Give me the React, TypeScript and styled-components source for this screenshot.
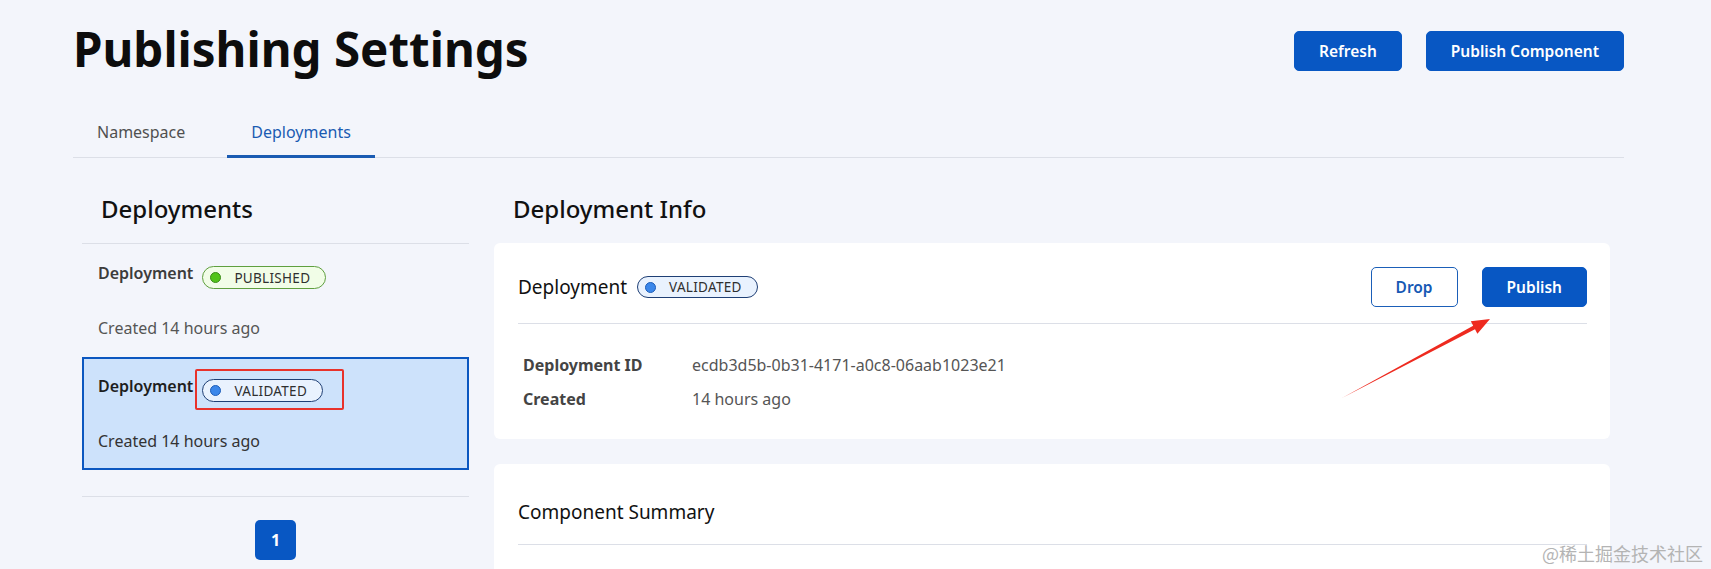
import React from "react";
import styled, { createGlobalStyle } from "styled-components";

const GlobalStyle = createGlobalStyle`
  html, body { margin: 0; padding: 0; }
  body {
    background: #f3f5fb;
    font-family: "Noto Sans", "Open Sans", sans-serif;
    color: #111;
    overflow: hidden;
  }
  * { box-sizing: border-box; }
`;

const Page = styled.div`
  position: relative;
  min-height: 569px;
  padding: 18px 87px 0 73px;
`;

const TopBar = styled.div`
  display: flex;
  justify-content: space-between;
  align-items: flex-start;
`;

const Title = styled.h1`
  margin: 0;
  font-size: 47.5px;
  line-height: 62px;
  font-weight: 700;
  color: #0d0d0d;
`;

const Actions = styled.div`
  display: flex;
  gap: 24px;
  margin-top: 13px;
`;

const Button = styled.button<{ $outline?: boolean }>`
  height: 40px;
  padding: 0 24px;
  border-radius: 5px;
  font-family: inherit;
  font-size: 15.5px;
  font-weight: 600;
  cursor: pointer;
  border: 1px solid ${(p) => (p.$outline ? "#1b5fb8" : "#0857c3")};
  background: ${(p) => (p.$outline ? "#fff" : "#0857c3")};
  color: ${(p) => (p.$outline ? "#1659b4" : "#fff")};
`;

const Tabs = styled.div`
  display: flex;
  gap: 18px;
  margin-top: 26px;
  border-bottom: 1px solid #dcdfe7;
`;

const Tab = styled.div<{ $active?: boolean }>`
  padding: 14px 24px 11px;
  margin-bottom: -1px;
  font-size: 16px;
  line-height: 24px;
  color: ${(p) => (p.$active ? "#1a5bb2" : "#505050")};
  border-bottom: 3px solid ${(p) => (p.$active ? "#1a5bb2" : "transparent")};
`;

const Main = styled.div`
  display: grid;
  grid-template-columns: 387px 1fr;
  gap: 25px;
  margin-top: 35px;
  padding: 0 14px 0 9px;
`;

const Heading = styled.h2<{ $divided?: boolean }>`
  margin: 0 0 ${(p) => (p.$divided ? "0" : "18px")};
  padding: 0 0 ${(p) => (p.$divided ? "18px" : "0")} 19px;
  font-size: 24px;
  line-height: 32px;
  font-weight: 500;
  color: #111;
  border-bottom: ${(p) => (p.$divided ? "1px solid #dcdfe7" : "none")};
`;

const Item = styled.div<{ $selected?: boolean }>`
  display: flex;
  flex-direction: column;
  gap: 30px;
  padding: 14px 14px 15px;
  border: 2px solid ${(p) => (p.$selected ? "#0b57c0" : "transparent")};
  background: ${(p) => (p.$selected ? "#cde2fb" : "transparent")};
`;

const ItemHead = styled.div`
  display: flex;
  align-items: flex-start;
  height: 26px;
`;

const ItemName = styled.span<{ $selected?: boolean }>`
  font-size: 16px;
  line-height: 26px;
  font-weight: 600;
  color: ${(p) => (p.$selected ? "#1e1e1e" : "#3c3c3c")};
`;

const BadgeSlot = styled.span`
  position: relative;
  display: inline-flex;
  margin: 6px 0 0 9px;
`;

const Highlight = styled.span`
  position: absolute;
  left: -7px;
  top: -10px;
  right: -21px;
  bottom: -8px;
  border: 2px solid #e8322b;
  border-radius: 2px;
`;

const Created = styled.div<{ $selected?: boolean }>`
  font-size: 16px;
  line-height: 24px;
  color: ${(p) => (p.$selected ? "#333" : "#555")};
`;

type Tone = "green" | "blue";

const tones = {
  green: { border: "#5f9f3f", bg: "#f1fde7", dot: "#52c41a", dotBorder: "#3a8a18" },
  blue: { border: "#1f3f75", bg: "#e9f2fe", dot: "#3b87ea", dotBorder: "#1d5db8" },
};

const Badge = styled.span<{ $tone: Tone; $h?: number }>`
  display: inline-flex;
  align-items: center;
  gap: 13px;
  height: ${(p) => p.$h ?? 23}px;
  padding: 0 15px 0 7px;
  border-radius: 12px;
  border: 1px solid ${(p) => tones[p.$tone].border};
  background: ${(p) => tones[p.$tone].bg};
  font-size: 13.5px;
  letter-spacing: 0.3px;
  color: #2f2f2f;
  white-space: nowrap;
`;

const Dot = styled.span<{ $tone: Tone }>`
  width: 11px;
  height: 11px;
  border-radius: 50%;
  background: ${(p) => tones[p.$tone].dot};
  border: 1px solid ${(p) => tones[p.$tone].dotBorder};
`;

const ListFooter = styled.div`
  display: flex;
  justify-content: center;
  margin-top: 26px;
  padding-top: 23px;
  border-top: 1px solid #dcdfe7;
`;

const PageButton = styled.button`
  width: 41px;
  height: 40px;
  border: none;
  border-radius: 5px;
  background: #0857c3;
  color: #fff;
  font-family: inherit;
  font-size: 16px;
  font-weight: 700;
`;

const Card = styled.div<{ $min?: number }>`
  position: relative;
  background: #fff;
  border-radius: 6px;
  padding: 0 23px 0 24px;
  min-height: ${(p) => p.$min ?? 0}px;
  & + & {
    margin-top: 25px;
  }
`;

const CardHeader = styled.div<{ $pad: string }>`
  display: flex;
  align-items: center;
  justify-content: space-between;
  padding: ${(p) => p.$pad};
  border-bottom: 1px solid #dcdfe7;
`;

const HeaderLeft = styled.div`
  display: flex;
  align-items: center;
  gap: 10px;
`;

const CardTitle = styled.span`
  font-size: 19px;
  line-height: 28px;
  color: #111;
`;

const CardActions = styled.div`
  display: flex;
  gap: 24px;
`;

const InfoGrid = styled.div`
  display: grid;
  grid-template-columns: 169px 1fr;
  padding: 24px 0 23px 5px;
`;

const Label = styled.div`
  font-size: 16px;
  line-height: 34px;
  font-weight: 700;
  color: #444;
`;

const Value = styled.div`
  font-size: 16px;
  line-height: 34px;
  color: #555;
`;

const Arrow = styled.svg`
  position: absolute;
  top: 70px;
  right: 106px;
  width: 170px;
  height: 95px;
`;

const Watermark = styled.div`
  position: absolute;
  right: 8px;
  top: 541px;
  font-family: "Noto Sans CJK SC", sans-serif;
  font-size: 18px;
  line-height: 24px;
  color: #b4b4b4;
`;

function StatusBadge({ tone, label, h }: { tone: Tone; label: string; h?: number }) {
  return (
    <Badge $tone={tone} $h={h}>
      <Dot $tone={tone} />
      {label}
    </Badge>
  );
}

export default function App() {
  return (
    <>
      <GlobalStyle />
      <Page>
        <TopBar>
          <Title>Publishing Settings</Title>
          <Actions>
            <Button>Refresh</Button>
            <Button>Publish Component</Button>
          </Actions>
        </TopBar>

        <Tabs>
          <Tab>Namespace</Tab>
          <Tab $active>Deployments</Tab>
        </Tabs>

        <Main>
          <div>
            <Heading $divided>Deployments</Heading>
            <Item>
              <ItemHead>
                <ItemName>Deployment</ItemName>
                <BadgeSlot>
                  <StatusBadge tone="green" label="PUBLISHED" />
                </BadgeSlot>
              </ItemHead>
              <Created>Created 14 hours ago</Created>
            </Item>
            <Item $selected>
              <ItemHead>
                <ItemName $selected>Deployment</ItemName>
                <BadgeSlot>
                  <StatusBadge tone="blue" label="VALIDATED" />
                  <Highlight />
                </BadgeSlot>
              </ItemHead>
              <Created $selected>Created 14 hours ago</Created>
            </Item>
            <ListFooter>
              <PageButton>1</PageButton>
            </ListFooter>
          </div>

          <div>
            <Heading>Deployment Info</Heading>
            <Card>
              <CardHeader $pad="24px 0 16px">
                <HeaderLeft>
                  <CardTitle>Deployment</CardTitle>
                  <StatusBadge tone="blue" label="VALIDATED" h={22} />
                </HeaderLeft>
                <CardActions>
                  <Button $outline>Drop</Button>
                  <Button>Publish</Button>
                </CardActions>
              </CardHeader>
              <InfoGrid>
                <Label>Deployment ID</Label>
                <Value>ecdb3d5b-0b31-4171-a0c8-06aab1023e21</Value>
                <Label>Created</Label>
                <Value>14 hours ago</Value>
              </InfoGrid>
              <Arrow viewBox="0 0 170 95">
                <polygon
                  points="8,85 139.2,12.7 136.8,8.3 156,6 143.4,20.7 141,16.3"
                  fill="#ee2a1f"
                />
              </Arrow>
            </Card>
            <Card $min={200}>
              <CardHeader $pad="34px 0 18px">
                <CardTitle>Component Summary</CardTitle>
              </CardHeader>
            </Card>
          </div>
        </Main>

        <Watermark>@稀土掘金技术社区</Watermark>
      </Page>
    </>
  );
}
